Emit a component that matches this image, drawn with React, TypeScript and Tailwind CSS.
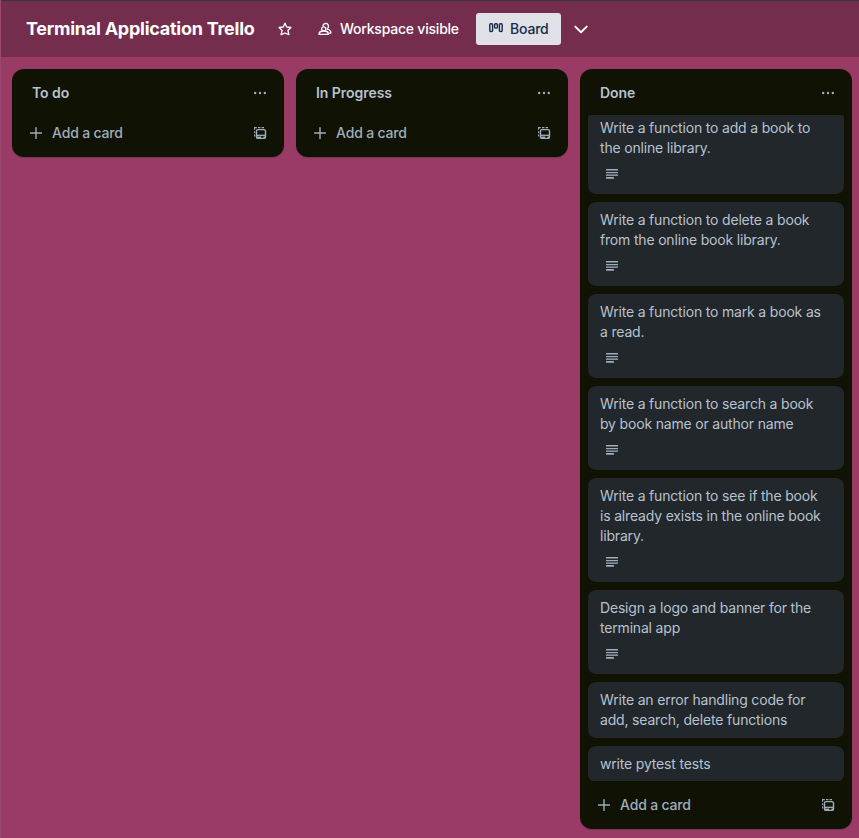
const lists = [
  { title: "To do", cards: [] as { lines: string[]; desc: boolean }[] },
  { title: "In Progress", cards: [] },
  {
    title: "Done",
    cards: [
      { lines: ["Write a function to add a book to", "the online library."], desc: true },
      { lines: ["Write a function to delete a book", "from the online book library."], desc: true },
      { lines: ["Write a function to mark a book as", "a read."], desc: true },
      { lines: ["Write a function to search a book", "by book name or author name"], desc: true },
      { lines: ["Write a function to see if the book", "is already exists in the online book", "library."], desc: true },
      { lines: ["Design a logo and banner for the", "terminal app"], desc: true },
      { lines: ["Write an error handling code for", "add, search, delete functions"], desc: false },
      { lines: ["write pytest tests"], desc: false },
    ],
  },
];

function StarIcon() {
  return (
    <svg width="16" height="16" viewBox="0 0 16 16" fill="none" stroke="currentColor" strokeWidth="1.35" strokeLinejoin="round">
      <path d="M8 2.2 L9.7 6 L13.9 6.5 L10.9 9.4 L11.9 13.7 L8 12 L4.1 13.7 L5.1 9.4 L2.1 6.5 L6.3 6 Z" />
    </svg>
  );
}

function PeopleIcon() {
  return (
    <svg width="16" height="16" viewBox="0 0 16 16" fill="none" stroke="currentColor" strokeWidth="1.3" strokeLinejoin="round" strokeLinecap="round">
      <circle cx="6.7" cy="7.9" r="2.1" />
      <path d="M2 13.4 C2 11.5 3.4 10.3 5.2 10 H8.4 C10.2 10.3 11.4 11.5 11.4 13.4 Z" />
      <path d="M6 4.8 C6.3 3.2 7.5 2.4 8.8 2.4 C10.6 2.5 11.6 3.9 11.4 5.5 C11.3 6.6 10.8 7.5 10.3 8.1 C12.5 8.7 13.9 10.1 13.9 12.1 H12.4" />
    </svg>
  );
}

function BoardIcon() {
  return (
    <svg width="16" height="16" viewBox="0 0 16 16" fill="none" stroke="currentColor" strokeWidth="1.4">
      <rect x="1.8" y="2.7" width="2.8" height="7.8" rx="1" />
      <rect x="6.6" y="2.7" width="2.8" height="4.4" rx="1" />
      <rect x="11.4" y="2.7" width="2.8" height="7.8" rx="1" />
    </svg>
  );
}

function DotsIcon() {
  return (
    <svg width="16" height="16" viewBox="0 0 16 16" fill="currentColor">
      <circle cx="3.2" cy="8" r="1.2" />
      <circle cx="8" cy="8" r="1.2" />
      <circle cx="12.8" cy="8" r="1.2" />
    </svg>
  );
}

function PlusIcon() {
  return (
    <svg width="16" height="16" viewBox="0 0 16 16" stroke="currentColor" strokeWidth="1.4" strokeLinecap="round">
      <path d="M8 2.6 V13.4 M2.6 8 H13.4" />
    </svg>
  );
}

function TemplateIcon() {
  return (
    <svg width="16" height="16" viewBox="0 0 16 16" fill="none" stroke="currentColor">
      <path d="M2.6 11.4 V9.6 M2.6 8.2 V6.2 M2.6 4.8 V2.6 H4.8 M6 2.6 H8.4 M9.6 2.6 H12" strokeWidth="1.1" />
      <rect x="4.5" y="4.6" width="9" height="8.8" rx="1.5" strokeWidth="1.4" />
      <path d="M4.5 10.3 H13.5" strokeWidth="1.3" />
      <path d="M5.2 12.2 H9.2 M11.4 12.2 H13" strokeWidth="1.5" />
    </svg>
  );
}

function DescriptionIcon() {
  return (
    <svg width="16" height="16" viewBox="0 0 16 16" fill="currentColor">
      <rect x="2" y="3" width="12" height="1.6" rx="0.3" />
      <rect x="2" y="6" width="12" height="1.2" />
      <rect x="2" y="8.5" width="12" height="1.3" />
      <rect x="2" y="11.1" width="8" height="1.6" rx="0.3" />
    </svg>
  );
}

export default function App() {
  return (
    <div className="flex h-[838px] w-[859px] flex-col overflow-hidden border-l border-[#99496f] bg-[#9a3b65] font-['Inter','Liberation_Sans',sans-serif]">
      <header className="flex h-[57px] shrink-0 items-center border-t border-[#37363c] bg-[#742d4c] pl-[25px] text-white">
        <h1 className="w-[229px] whitespace-nowrap text-[18px] font-bold leading-6 tracking-[-0.25px]">Terminal Application Trello</h1>
        <button className="ml-[22px]"><StarIcon /></button>
        <button className="ml-6 flex items-center text-[14px] font-[550] leading-5">
          <PeopleIcon />
          <span className="ml-[7px] w-[121px] whitespace-nowrap text-left tracking-[-0.22px]">Workspace visible</span>
        </button>
        <button className="ml-[15px] flex h-8 w-[85px] items-center rounded-[3px] bg-[#dfe1e6] pl-3 text-[14px] font-[550] leading-5 text-[#172b4d]">
          <BoardIcon />
          <span className="ml-1.5 tracking-[-0.2px]">Board</span>
        </button>
        <button className="ml-3">
          <svg width="16" height="16" viewBox="0 0 16 16" fill="none" stroke="currentColor" strokeWidth="1.9" strokeLinecap="round" strokeLinejoin="round">
            <path d="M2.3 5.6 L8 11.2 L13.7 5.6" />
          </svg>
        </button>
      </header>
      <main className="flex items-start gap-3 pl-[11px] pt-3">
        {lists.map((list) => (
          <section key={list.title} className="w-[272px] shrink-0 rounded-xl bg-[#101204] text-[14px] leading-5 shadow-[0_1px_1px_#091e4240]">
            <div className="flex h-[46px] items-center justify-between pl-5 pr-4 pt-0.5 text-[#b6c2cf]">
              <h2 className="font-semibold tracking-[-0.04px]">{list.title}</h2>
              <span className="text-[#9fadbc]"><DotsIcon /></span>
            </div>
            {list.cards.length > 0 && (
              <div className="h-[666px] overflow-hidden px-2">
                <ol className="-mt-[5px] flex flex-col gap-2">
                  {list.cards.map((card) => (
                    <li key={card.lines[0]} className="rounded-lg bg-[#22272b] px-3 py-2 font-[430] tracking-[-0.18px] text-[#b6c2cf]">
                      {card.lines.map((line) => (
                        <p key={line} className="whitespace-nowrap">{line}</p>
                      ))}
                      {card.desc && (
                        <div className="flex h-7 items-start pl-1 pt-2 text-[#9fadbc]"><DescriptionIcon /></div>
                      )}
                    </li>
                  ))}
                </ol>
              </div>
            )}
            <div className={`flex items-start justify-between pl-4 pr-4 text-[#9fadbc] ${list.cards.length > 0 ? "h-12 pt-3.5" : "h-[42px] pt-2"}`}>
              <button className="flex items-center gap-2 font-medium tracking-[-0.17px]"><PlusIcon />Add a card</button>
              <span className="pt-0.5"><TemplateIcon /></span>
            </div>
          </section>
        ))}
      </main>
    </div>
  );
}
